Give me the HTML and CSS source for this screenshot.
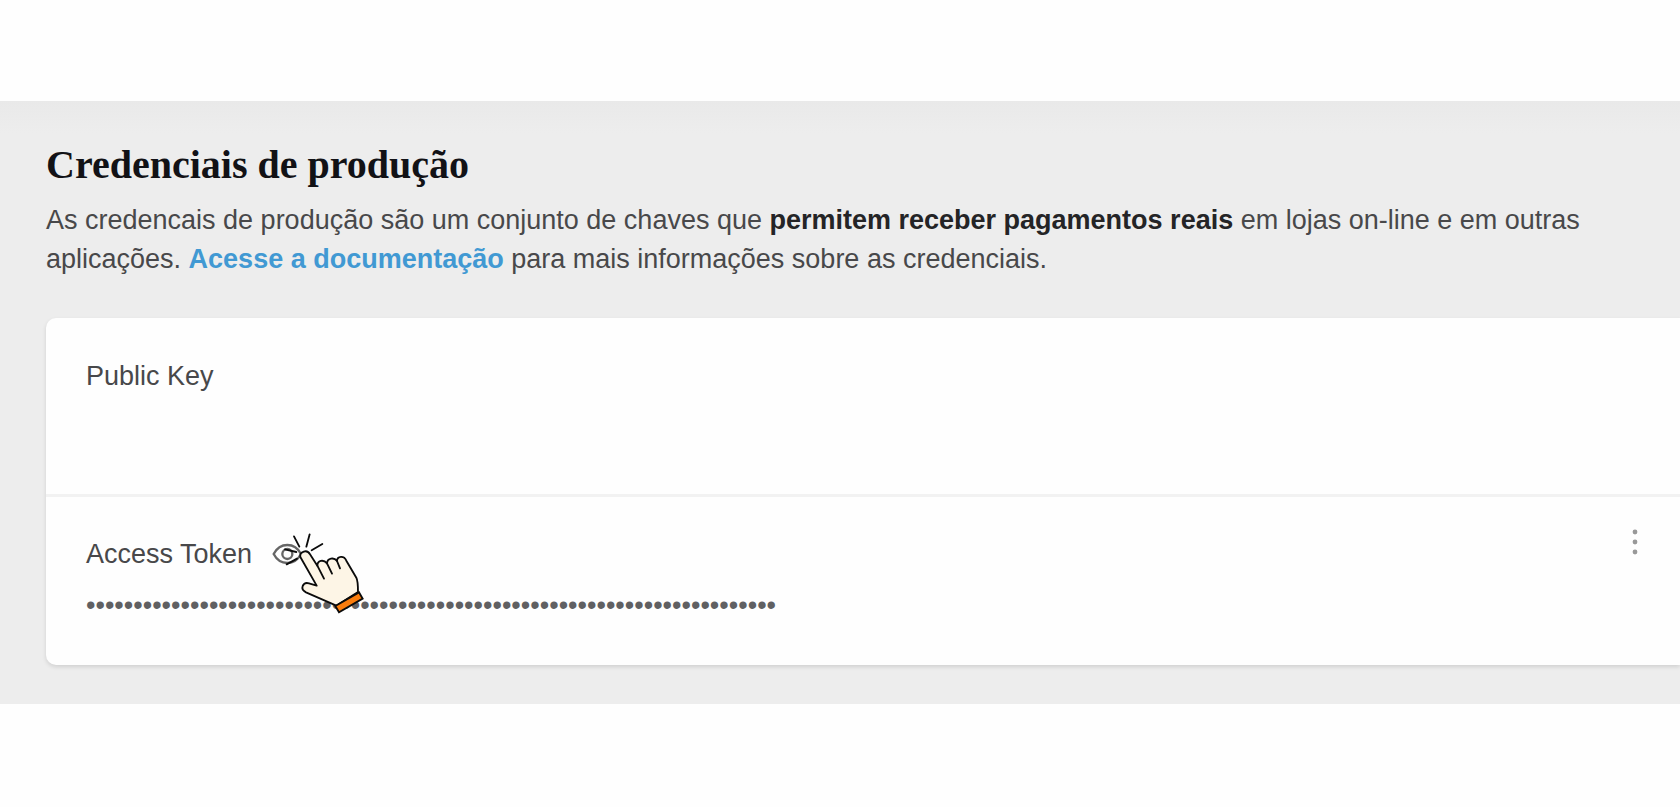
FILE: index.html
```html
<!DOCTYPE html>
<html lang="pt-BR">
<head>
<meta charset="utf-8">
<meta name="viewport" content="width=device-width, initial-scale=1">
<title>Credenciais de produção</title>
<link rel="stylesheet" href="styles.css">
</head>
<body>
<main class="credentials">
  <h1 class="title">Credenciais de produção</h1>
  <p class="intro">As credencais de produção são um conjunto de chaves que <strong>permitem receber pagamentos reais</strong> em lojas on-line e em outras aplicações. <a class="link" href="#">Acesse a documentação</a> para mais informações sobre as credenciais.</p>
  <div class="card">
    <section class="row row-key">
      <h2 class="label">Public Key</h2>
    </section>
    <section class="row row-token">
      <div class="token">
        <div class="heading">
          <h2 class="label">Access Token</h2>
          <div class="reveal">
            <button class="eye" type="button" aria-label="Mostrar Access Token">
              <svg viewBox="0 0 90 72" width="30" height="24" fill="none" stroke="#666" stroke-width="7">
                <path d="M5 36C16 15 30 9 46 9s30 6 41 27C76 57 62 63 46 63S16 57 5 36Z"/>
                <circle cx="46" cy="36" r="15"/>
              </svg>
            </button>
            <svg class="pointer" viewBox="0 0 390 330" width="130" height="110" fill="none" stroke="#0b0b0b" stroke-width="5.5" stroke-linecap="round" stroke-linejoin="round" aria-hidden="true">
              <path d="M117 49l16 31M164 43l-10 37M202 72l-32 19M90 88l34 8M95 133l31-17"/>
              <path fill="#fdf5e6" d="M136 111C133 94 157 87 165 103L187 137C187 121 205 117 216 130C217 114 237 111 246 123C247 108 267 106 274 122L304 173C308 181 309 190 309 216L244 257L153 217C133 207 144 185 162 190L185 197Z"/>
              <path d="M187 137l20 39M216 130l15 31M246 123l9 22"/>
              <path fill="#fb7d0d" stroke-linejoin="miter" d="M241 258L312 217L323 236L252 277Z"/>
            </svg>
          </div>
        </div>
        <div class="mask" aria-label="Access Token oculto">•••••••••••••••••••••••••••••••••••••••••••••••••••••••••••••••••••••••••</div>
      </div>
      <button class="menu" type="button" aria-label="Mais opções">
        <svg viewBox="0 0 10 26" width="10" height="26" fill="#999"><circle cx="5" cy="3" r="2.4"/><circle cx="5" cy="13" r="2.4"/><circle cx="5" cy="23" r="2.4"/></svg>
      </button>
    </section>
  </div>
</main>
</body>
</html>
```
FILE: styles.css
```css
* { box-sizing: border-box; }
body {
  margin: 0;
  padding: 101px 0;
  background: #fefefe;
  color: #48484a;
  font-family: "Liberation Sans", Arial, sans-serif;
  font-size: 27px;
  line-height: 40px;
}
.credentials {
  padding: 40px 0 39px 46px;
  background: linear-gradient(#e9e9e9, #ededed 32px);
}
.title {
  margin: 0 0 12px;
  color: #121216;
  font: bold 40px/48px "Liberation Serif", "Times New Roman", serif;
}
.intro {
  margin: 0 0 39px;
  padding-right: 80px;
  line-height: 39px;
}
.intro strong { color: #242426; }
.link {
  color: #4199d3;
  font-weight: bold;
  text-decoration: none;
}
.card {
  background: #fefefe;
  border-radius: 10px 0 0 10px;
  box-shadow: 0 2px 4px rgba(0, 0, 0, 0.12);
}
.row { padding: 38px 40px; }
.row-key {
  min-height: 179px;
  border-bottom: 3px solid #f2f2f2;
}
.row-token {
  display: flex;
  justify-content: space-between;
  align-items: flex-start;
  padding-top: 32px;
  padding-bottom: 40px;
}
.token { padding-top: 5px; }
.label {
  margin: 0;
  font-size: 27px;
  font-weight: normal;
}
.heading {
  display: flex;
  align-items: center;
  gap: 20px;
  margin-bottom: 11px;
}
.reveal {
  position: relative;
  display: flex;
}
.mask { color: #606062; }
.eye, .menu {
  display: flex;
  padding: 0;
  border: 0;
  background: none;
  cursor: pointer;
}
.pointer {
  position: absolute;
  top: -22px;
  left: -17px;
  pointer-events: none;
}
```
